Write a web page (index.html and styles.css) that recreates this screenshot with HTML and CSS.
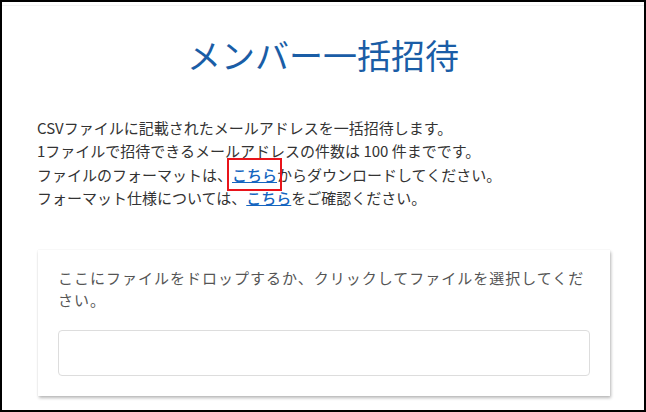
FILE: index.html
```html
<!DOCTYPE html>
<html lang="ja">
<head>
<meta charset="utf-8">
<link rel="stylesheet" href="styles.css">
</head>
<body>
<div class="frame">
  <div class="topline"></div>
  <h1 class="title">メンバー一括招待</h1>
  <div class="intro">
    <p>CSVファイルに記載されたメールアドレスを一括招待します。</p>
    <p>1ファイルで招待できるメールアドレスの件数は 100 件までです。</p>
    <p>ファイルのフォーマットは、<span class="mark"><a href="#" class="link">こちら</a></span>からダウンロードしてください。</p>
    <p>フォーマット仕様については、<a href="#" class="link">こちら</a>をご確認ください。</p>
  </div>
  <div class="card">
    <p class="card-text">ここにファイルをドロップするか、クリックしてファイルを選択してください。</p>
    <div class="dropbox"></div>
  </div>
</div>
</body>
</html>
```
FILE: styles.css
```css
html, body {
  margin: 0;
  padding: 0;
  background: #fff;
}
.frame {
  box-sizing: border-box;
  width: 646px;
  height: 412px;
  border: 2px solid #000;
  overflow: hidden;
  font-family: "Noto Sans CJK JP", "Noto Sans", sans-serif;
  color: #333;
  display: flex;
  flex-direction: column;
}
.topline {
  height: 1px;
  margin: 3px 0 0 0;
  background: #f3f3f3;
}
.title {
  margin: 26px 0 0 0;
  text-align: center;
  font-weight: 400;
  font-size: 34px;
  line-height: 46px;
  color: #1a5da6;
}
.intro {
  margin: 38px 0 0 35px;
  font-size: 15px;
  line-height: 23.3px;
}
.intro p {
  margin: 0;
}
.link {
  color: #1565c0;
  text-decoration: underline;
  font-weight: 500;
}
.mark {
  position: relative;
}
.mark::after {
  content: "";
  position: absolute;
  left: -5px;
  right: -5px;
  top: -6px;
  bottom: -6px;
  border: 2px solid #e8141b;
  pointer-events: none;
}
.card {
  margin: 41px 34px 0 36px;
  background: #fff;
  box-shadow: 1px 2px 3px rgba(0,0,0,0.28), 0 0 1px rgba(0,0,0,0.1);
  padding: 17px 20px 20px 20px;
}
.card-text {
  margin: 0;
  font-size: 15px;
  line-height: 22px;
  color: #555;
  letter-spacing: 1px;
}
.dropbox {
  margin-top: 19px;
  height: 44px;
  border: 1px solid #ddd;
  border-radius: 4px;
}
```
